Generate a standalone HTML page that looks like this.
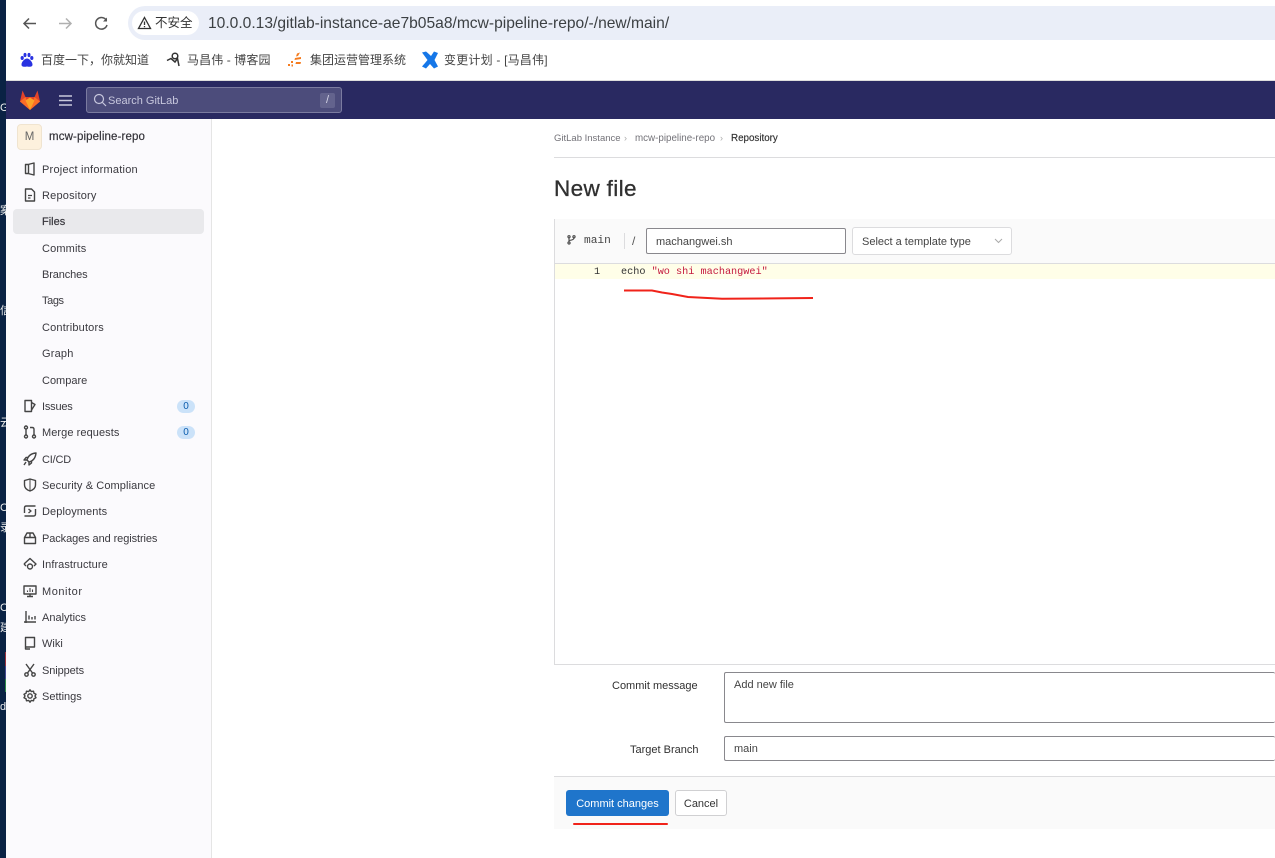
<!DOCTYPE html>
<html><head><meta charset="utf-8">
<style>
html,body{margin:0;padding:0;width:1275px;height:858px;overflow:hidden;background:#fff;font-family:"Liberation Sans","Noto Sans CJK SC",sans-serif;color:#303030}
.a{position:absolute;white-space:nowrap}
.n{position:absolute;left:42px;margin-top:1px;font-size:11px;color:#3a393f;line-height:14px;white-space:nowrap}
.i{position:absolute;left:23px;width:14px;height:14px;fill:none;stroke:#444;stroke-width:1.4;stroke-linejoin:round}
.b{position:absolute;left:177px;width:18px;height:13px;border-radius:7px;background:#cbe2f9;color:#0b5cad;font-size:10px;line-height:13px;text-align:center}
.bm{position:absolute;font-size:12px;color:#444;line-height:16px;white-space:nowrap}
.l{position:absolute;font-size:11px;color:#303030;line-height:14px;white-space:nowrap}
.inp{position:absolute;box-sizing:border-box;border:1px solid #89888d;border-radius:2px;background:#fff;font-size:11px;color:#444;white-space:nowrap}
</style></head><body>
<!-- desktop strip -->
<div class="a" style="left:0;top:0;width:6px;height:858px;background:#0a2244"></div>
<div class="a" style="left:0;top:102px;font-size:11px;color:#eee;width:6px;overflow:hidden">Gi</div>
<div class="a" style="left:0;top:202px;font-size:11px;color:#eee;width:6px;overflow:hidden">案</div>
<div class="a" style="left:0;top:302px;font-size:11px;color:#eee;width:6px;overflow:hidden">信</div>
<div class="a" style="left:0;top:414px;font-size:11px;color:#eee;width:6px;overflow:hidden">云</div>
<div class="a" style="left:0;top:502px;font-size:11px;color:#eee;width:6px;overflow:hidden">CI</div>
<div class="a" style="left:0;top:519px;font-size:11px;color:#eee;width:6px;overflow:hidden">录</div>
<div class="a" style="left:0;top:602px;font-size:11px;color:#eee;width:6px;overflow:hidden">CI</div>
<div class="a" style="left:0;top:619px;font-size:11px;color:#eee;width:6px;overflow:hidden">建</div>
<div class="a" style="left:5px;top:652px;width:1px;height:14px;background:#9b3340"></div>
<div class="a" style="left:5px;top:666px;width:1px;height:13px;background:#444a90"></div>
<div class="a" style="left:5px;top:679px;width:1px;height:13px;background:#2d8a4a"></div>
<div class="a" style="left:0;top:701px;font-size:11px;color:#eee;width:6px;overflow:hidden">d</div>

<!-- browser chrome -->
<div class="a" style="left:6px;top:0;width:1269px;height:81px;background:#fff"></div>
<svg class="a" style="left:20px;top:14px" width="20" height="20" fill="none" stroke="#555" stroke-width="1.500"><path d="M16 9.500H4M9 4.500L4 9.500L9 14.500"/></svg>
<svg class="a" style="left:56px;top:14px" width="20" height="20" fill="none" stroke="#b0b0b0" stroke-width="1.500"><path d="M3 9.500H15M10 4.500L15 9.500L10 14.500"/></svg>
<svg class="a" style="left:92px;top:14px" width="20" height="20" fill="none" stroke="#555" stroke-width="1.500"><path d="M14.500 6.500A5.800 5.800 0 1 0 15 11"/><path d="M15 3.500V7.500H11" fill="#555" stroke="none"/></svg>
<div class="a" style="left:128px;top:6px;width:1147px;height:34px;background:#eaeef8;border-radius:17px 0 0 17px"></div>
<div class="a" style="left:132px;top:11px;width:67px;height:24px;background:#fff;border-radius:12px"></div>
<svg class="a" style="left:137px;top:16px" width="15" height="14" fill="none" stroke="#333" stroke-width="1.300"><path d="M7.500 1.500L13.500 12.500H1.500Z"/><path d="M7.500 5.500V9M7.500 10V11.200"/></svg>
<div class="a" style="left:155px;top:15px;font-size:12.500px;line-height:17px;color:#333">不安全</div>
<div class="a" style="left:208px;top:14px;font-size:15.600px;line-height:20px;color:#3c4043">10.0.0.13/gitlab-instance-ae7b05a8/mcw-pipeline-repo/-/new/main/</div>

<!-- bookmarks -->
<svg class="a" style="left:19px;top:52px" width="15" height="16" fill="#2932e1"><ellipse cx="3.200" cy="6" rx="1.600" ry="2"/><ellipse cx="6" cy="3" rx="1.500" ry="2.100"/><ellipse cx="10" cy="3" rx="1.500" ry="2.100"/><ellipse cx="12.800" cy="6" rx="1.600" ry="2"/><path d="M8 6.500C5.500 6.500 2.500 10 2.500 12.500C2.500 15 5 15 8 14.500C11 15 13.500 15 13.500 12.500C13.500 10 10.500 6.500 8 6.500Z"/></svg>
<div class="bm" style="left:41px;top:52px">百度一下，你就知道</div>
<svg class="a" style="left:165px;top:51px" width="17" height="17" fill="none" stroke="#333" stroke-width="1.500"><circle cx="10" cy="5" r="2.800"/><path d="M2 9.500L6 7.500L10 11L12.500 7.500L14 15"/></svg>
<div class="bm" style="left:187px;top:52px;letter-spacing:.1px">马昌伟 - 博客园</div>
<svg class="a" style="left:287px;top:52px" width="17" height="16" fill="#f57c1f"><path d="M10 1.500L13 .5L11 4L9 4.500Z"/><path d="M8 6L14 5V7L7.500 8Z"/><path d="M9 10H14L13.500 12H8.500Z"/><rect x="4" y="9" width="2" height="2"/><rect x="1" y="12" width="2" height="2"/><rect x="4.500" y="12.500" width="1.500" height="2"/></svg>
<div class="bm" style="left:310px;top:52px">集团运营管理系统</div>
<svg class="a" style="left:421px;top:51px" width="18" height="18" fill="#1677e8"><path d="M1 1.500L5 .5C7 2 9 4 10 5L13 .5L17 2L13.500 9L17 15.500L13 17.500L9 13L5 17.500L1 15.500C3 13 5 11 6.500 9C5 7 3 4 1 1.500Z"/></svg>
<div class="bm" style="left:444px;top:52px;letter-spacing:.2px">变更计划 - [马昌伟]</div>
<div class="a" style="left:6px;top:80px;width:1269px;height:1px;background:#ddd"></div>

<!-- navbar -->
<div class="a" style="left:6px;top:81px;width:1269px;height:38px;background:#292961"></div>
<svg class="a" style="left:19px;top:89px" width="22" height="22" viewBox="0 0 22 22"><path d="M1 12.500L3.500 1.500L6.500 8H15.500L18.500 1.500L21 12.500L11 21Z" fill="#e24329"/><path d="M6.500 8L11 21L1 12.500Z" fill="#fc6d26"/><path d="M15.500 8L11 21L21 12.500Z" fill="#fc6d26"/><path d="M6.500 11.500L11 21L15.500 11.500L11 8.500Z" fill="#fca326"/></svg>
<svg class="a" style="left:59px;top:95px" width="13" height="11"><path d="M0 1h13M0 5.500h13M0 10h13" stroke="#c9c9dc" stroke-width="1.500"/></svg>
<div class="a" style="left:86px;top:87px;width:256px;height:26px;box-sizing:border-box;background:#4c4c7b;border:1px solid #7b7ba0;border-radius:3px"></div>
<svg class="a" style="left:93px;top:93px" width="14" height="14" fill="none" stroke="#c7c7dd" stroke-width="1.200"><circle cx="6" cy="6" r="4.500"/><path d="M9.500 9.500L13 13"/></svg>
<div class="a" style="left:108px;top:94px;font-size:11px;line-height:14px;color:#c7c7dd">Search GitLab</div>
<div class="a" style="left:320px;top:93px;width:15px;height:15px;background:#63638d;border-radius:2px;color:#d6d6e8;font-size:11px;line-height:15px;text-align:center">/</div>

<!-- sidebar -->
<div class="a" style="left:6px;top:119px;width:205px;height:739px;background:#fbfafd;border-right:1px solid #e5e5e5"></div>
<div class="a" style="left:17px;top:124px;width:25px;height:26px;box-sizing:border-box;background:#fdf1dd;border:1px solid #f0e4d0;border-radius:4px;color:#666;font-size:11.500px;line-height:24px;text-align:center">M</div>
<div class="a" style="left:49px;top:130px;font-size:11.500px;line-height:14px;letter-spacing:.12px;color:#333238;-webkit-text-stroke:.2px #333238">mcw-pipeline-repo</div>
<div class="a" style="left:13px;top:209px;width:191px;height:25px;background:#e9e9ec;border-radius:4px"></div>

<svg class="i" style="top:162px" viewBox="0 0 14 14"><path d="M5 2.500L11 1V13L5 11.500H2.500V2.500Z"/><path d="M5.500 2.500V11.500"/></svg>
<div class="n" style="top:162px;letter-spacing:.22px">Project information</div>
<svg class="i" style="top:188px" viewBox="0 0 14 14"><path d="M2.500 1H8.500L11.500 4V13H2.500Z"/><path d="M5 7.500H9M5 10H7.500" stroke-width="1.200"/></svg>
<div class="n" style="top:188px;letter-spacing:.2px">Repository</div>
<div class="n" style="top:214px;-webkit-text-stroke:.2px #333238">Files</div>
<div class="n" style="top:241px;letter-spacing:.14px">Commits</div>
<div class="n" style="top:267px;letter-spacing:-.12px">Branches</div>
<div class="n" style="top:293px;letter-spacing:-.4px">Tags</div>
<div class="n" style="top:320px;letter-spacing:.17px">Contributors</div>
<div class="n" style="top:346px;letter-spacing:.2px">Graph</div>
<div class="n" style="top:373px">Compare</div>

<svg class="i" style="top:399px" viewBox="0 0 14 14"><path d="M2 1.500H8.500V12.500H2Z"/><path d="M8.500 3.500L12 5.500L8.500 11"/></svg>
<div class="n" style="top:399px;letter-spacing:-.2px">Issues</div>
<div class="b" style="top:400px">0</div>
<svg class="i" style="top:425px" viewBox="0 0 14 14"><circle cx="3" cy="2.500" r="1.500"/><circle cx="3" cy="11.500" r="1.500"/><circle cx="11" cy="11.500" r="1.500"/><path d="M3 4V10M11 10V4.500Q11 2.500 9 2.500H7"/></svg>
<div class="n" style="top:425px;letter-spacing:.07px">Merge requests</div>
<div class="b" style="top:426px">0</div>
<svg class="i" style="top:452px" viewBox="0 0 14 14"><path d="M4 8C5 4 8 1.500 13 1C12.500 6 10 9 6 10Z"/><path d="M4 8H1L3 5.500H5.500M6 10V13L8.500 11V8.500M3 10L1 13"/></svg>
<div class="n" style="top:452px;letter-spacing:-.2px">CI/CD</div>
<svg class="i" style="top:478px" viewBox="0 0 14 14"><path d="M7 1L12.500 2.500V7C12.500 10 10 12 7 13C4 12 1.500 10 1.500 7V2.500Z"/><path d="M7 1V13" stroke-width="1"/></svg>
<div class="n" style="top:478px;letter-spacing:.1px">Security &amp; Compliance</div>
<svg class="i" style="top:504px" viewBox="0 0 14 14"><path d="M1.500 9V4Q1.500 2 3.500 2H12.500M12.500 5V10Q12.500 12 10.500 12H1.500"/><path d="M5.500 5L8 7L5.500 9"/></svg>
<div class="n" style="top:504px;letter-spacing:.09px">Deployments</div>
<svg class="i" style="top:531px" viewBox="0 0 14 14"><path d="M1.500 6.500L4 2H10L12.500 6.500V12.500H1.500Z"/><path d="M1.500 6.500H12.500M7 2V6.500"/></svg>
<div class="n" style="top:531px;letter-spacing:-.09px">Packages and registries</div>
<svg class="i" style="top:557px" viewBox="0 0 14 14"><path d="M1 7L7 1.500L13 7L11 9M3 9L1 7"/><circle cx="7" cy="9.500" r="2.500"/></svg>
<div class="n" style="top:557px;letter-spacing:.07px">Infrastructure</div>
<svg class="i" style="top:584px" viewBox="0 0 14 14"><path d="M1 2H13V10H1ZM7 10V12.500M4 12.500H10"/><path d="M4.500 8V6.500M7 8V4M9.500 8V5.500" stroke-width="1.100"/></svg>
<div class="n" style="top:584px;letter-spacing:.55px">Monitor</div>
<svg class="i" style="top:610px" viewBox="0 0 14 14"><path d="M1 12H13M3 1V13M6 9.500V5.500M9 9.500V7M12 9.500V6"/></svg>
<div class="n" style="top:610px">Analytics</div>
<svg class="i" style="top:636px" viewBox="0 0 14 14"><path d="M2.500 1.500H11.500V11H2.500ZM2.500 11V13H7"/></svg>
<div class="n" style="top:636px">Wiki</div>
<svg class="i" style="top:663px" viewBox="0 0 14 14"><path d="M3 1L9.500 10M11 1L4.500 10"/><circle cx="3.500" cy="11.500" r="1.700"/><circle cx="10.500" cy="11.500" r="1.700"/></svg>
<div class="n" style="top:663px;letter-spacing:-.1px">Snippets</div>
<svg class="i" style="top:689px" viewBox="0 0 14 14"><path d="M7 .800L8.300 2.600L10.500 2.200L11 4.300L13 5.300L12 7L13 8.700L11 9.700L10.500 11.800L8.300 11.400L7 13.200L5.700 11.400L3.500 11.800L3 9.700L1 8.700L2 7L1 5.300L3 4.300L3.500 2.200L5.700 2.600Z"/><circle cx="7" cy="7" r="2.200"/></svg>
<div class="n" style="top:689px">Settings</div>

<!-- breadcrumb -->
<div class="a" style="left:554px;top:132px;font-size:9.500px;line-height:13px;color:#737278">GitLab Instance</div>
<div class="a" style="left:624px;top:132px;font-size:9px;line-height:12px;color:#aaa">›</div>
<div class="a" style="left:635px;top:132px;font-size:9.800px;line-height:13px;color:#737278">mcw-pipeline-repo</div>
<div class="a" style="left:720px;top:132px;font-size:9px;line-height:12px;color:#aaa">›</div>
<div class="a" style="left:731px;top:132px;font-size:9.800px;line-height:13px;color:#303030;-webkit-text-stroke:.15px #303030">Repository</div>
<div class="a" style="left:554px;top:157px;width:721px;height:1px;background:#dcdcde"></div>
<div class="a" style="left:554px;top:175px;font-size:22.500px;line-height:28px;letter-spacing:.35px;color:#303030;-webkit-text-stroke:.3px #303030">New file</div>

<!-- editor -->
<div class="a" style="left:554px;top:219px;width:721px;height:446px;box-sizing:border-box;border-left:1px solid #dcdcde;border-bottom:1px solid #dcdcde;background:#fff"></div>
<div class="a" style="left:555px;top:219px;width:720px;height:44px;background:#fafafa;border-bottom:1px solid #dcdcde"></div>
<svg class="a" style="left:567px;top:235px" width="9" height="10" fill="none" stroke="#444" stroke-width="1.100"><circle cx="2" cy="1.800" r="1.100"/><circle cx="2" cy="8" r="1.100"/><circle cx="7" cy="1.800" r="1.100"/><path d="M2 3V7M7 3Q7 5 2 5.500"/></svg>
<div class="a" style="left:584px;top:234px;font-family:'Liberation Mono',monospace;font-size:11.200px;line-height:14px;color:#444">main</div>
<div class="a" style="left:624px;top:233px;width:1px;height:16px;background:#dcdcde"></div>
<div class="a" style="left:632px;top:234px;font-size:12px;line-height:14px;color:#555">/</div>
<div class="inp" style="left:646px;top:228px;width:200px;height:26px;line-height:26px;padding-left:9px">machangwei.sh</div>
<div class="a" style="left:852px;top:227px;width:160px;height:28px;box-sizing:border-box;background:#fff;border:1px solid #dcdcde;border-radius:3px;font-size:11px;line-height:28px;padding-left:9px;color:#444">Select a template type</div>
<svg class="a" style="left:994px;top:238px" width="9" height="6" fill="none" stroke="#aaa" stroke-width="1"><path d="M1 1L4.500 4.500L8 1"/></svg>
<div class="a" style="left:555px;top:264px;width:720px;height:15px;background:#fffee8"></div>
<div class="a" style="left:594px;top:266px;font-family:'Liberation Mono',monospace;font-size:10.200px;line-height:13px;color:#333">1</div>
<div class="a" style="left:621px;top:266px;font-family:'Liberation Mono',monospace;font-size:10.200px;line-height:13px;color:#333">echo <span style="color:#c41a3e">"wo shi machangwei"</span></div>
<svg class="a" style="left:620px;top:285px" width="200" height="20" fill="none" stroke="#f0231a" stroke-width="2"><path d="M4 5.500H32L42 7.500L52 9L68 12L102 13.800L193 13"/></svg>

<!-- form -->
<div class="l" style="left:612px;top:679px">Commit message</div>
<div class="inp" style="left:724px;top:672px;width:551px;height:51px;border-right:0;padding:5px 0 0 9px;line-height:14px">Add new file</div>
<div class="l" style="left:630px;top:743px">Target Branch</div>
<div class="inp" style="left:724px;top:736px;width:551px;height:25px;border-right:0;padding-left:9px;line-height:24px">main</div>
<div class="a" style="left:554px;top:776px;width:721px;height:53px;background:#fafafa;border-top:1px solid #dcdcde;box-sizing:border-box"></div>
<div class="a" style="left:566px;top:790px;width:103px;height:26px;background:#1f75cb;border-radius:3px;color:#fff;font-size:11px;line-height:28px;text-align:center">Commit changes</div>
<div class="a" style="left:675px;top:790px;width:52px;height:26px;box-sizing:border-box;background:#fff;border:1px solid #d0d0d2;border-radius:3px;color:#333;font-size:11px;line-height:26px;text-align:center">Cancel</div>
<div class="a" style="left:573px;top:823px;width:95px;height:2px;background:#f0231a;border-radius:1px"></div>
</body></html>
